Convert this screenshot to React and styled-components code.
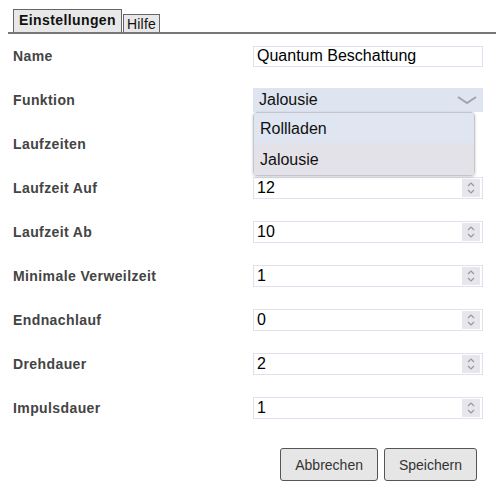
import React from 'react'
import styled, { createGlobalStyle } from 'styled-components'

const GlobalStyle = createGlobalStyle`
  body {
    margin: 0;
    background: #fff;
    font-family: "Liberation Sans", Arial, sans-serif;
  }
`

const Page = styled.div`
  padding: 9px 0 0 8px;
  width: 488px;
`

const TabBar = styled.div`
  display: flex;
  align-items: flex-end;
  gap: 1px;
  padding-left: 5px;
  border-bottom: 2px solid #777;
`

const Tab = styled.div`
  box-sizing: border-box;
  height: ${props => (props.active ? '23px' : '18px')};
  padding: ${props => (props.active ? '0 5px' : '0 3px')};
  border: 1px solid #666;
  border-bottom: none;
  background: #e8e8e8;
  color: #111;
  font-size: 14px;
  letter-spacing: ${props => (props.active ? '0.4px' : '0.2px')};
  font-weight: ${props => (props.active ? 'bold' : 'normal')};
  line-height: ${props => (props.active ? '21px' : '19px')};
`

const Form = styled.div`
  display: flex;
  flex-direction: column;
  padding-left: 5px;
`

const Row = styled.div`
  position: relative;
  display: grid;
  grid-template-columns: 240px 230px;
  align-items: center;
  height: 44px;
`

const Label = styled.div`
  font-size: 14px;
  letter-spacing: 0.4px;
  font-weight: bold;
  color: #444;
`

const TextBox = styled.div`
  box-sizing: border-box;
  height: ${props => (props.short ? '21px' : '22px')};
  border: 1px solid #dde2ee;
  padding-left: 3px;
  font-size: 16px;
  line-height: 20px;
  color: #000;
  display: flex;
  align-items: center;
  justify-content: space-between;
`

const Spinner = styled.div`
  width: 18px;
  height: 18px;
  margin-right: 2px;
  background: #e6e6ec;
  display: flex;
  align-items: center;
  justify-content: center;
`

const Select = styled.div`
  box-sizing: border-box;
  height: 24px;
  padding: 0 6px;
  background: #dee4f0;
  font-size: 16px;
  color: #111;
  display: flex;
  align-items: center;
  justify-content: space-between;
`

const Menu = styled.div`
  position: absolute;
  left: 240px;
  top: 34px;
  width: 222px;
  box-sizing: border-box;
  border: 1px solid #c4c4cc;
  border-radius: 4px;
  box-shadow: 0 1px 3px rgba(0, 0, 0, 0.2);
  overflow: hidden;
  z-index: 2;
`

const Option = styled.div`
  height: 30px;
  padding: 2px 0 0 6px;
  box-sizing: border-box;
  display: flex;
  align-items: center;
  font-size: 16px;
  color: #111;
  background: ${props => (props.hover ? '#e4e2e9' : '#dfe5f1')};
  &:last-child {
    height: 32px;
  }
`

const Buttons = styled.div`
  display: flex;
  justify-content: flex-end;
  gap: 6px;
  margin-top: 18px;
  padding-right: 19px;
`

const Button = styled.button`
  box-sizing: border-box;
  height: 33px;
  padding: 0 14px;
  border: 1px solid #555;
  border-radius: 3px;
  background: #e6e6e6;
  color: #333;
  font-family: "Liberation Sans", Arial, sans-serif;
  font-size: 14px;
`

const SpinIcon = () => (
  <svg width="10" height="14" viewBox="0 0 10 14">
    <path d="M2 5 L5 2 L8 5" fill="none" stroke="#999" strokeWidth="1.2" />
    <path d="M2 9 L5 12 L8 9" fill="none" stroke="#999" strokeWidth="1.2" />
  </svg>
)

const Chevron = () => (
  <svg width="20" height="10" viewBox="0 0 20 10">
    <path d="M1 2 L10 8 L19 2" fill="none" stroke="#a0a4ae" strokeWidth="2" />
  </svg>
)

const numbers = [
  ['Laufzeit Auf', '12'],
  ['Laufzeit Ab', '10'],
  ['Minimale Verweilzeit', '1'],
  ['Endnachlauf', '0'],
  ['Drehdauer', '2'],
  ['Impulsdauer', '1'],
]

export default function App() {
  return (
    <Page>
      <GlobalStyle />
      <TabBar>
        <Tab active>Einstellungen</Tab>
        <Tab>Hilfe</Tab>
      </TabBar>
      <Form>
        <Row>
          <Label>Name</Label>
          <TextBox short>Quantum Beschattung</TextBox>
        </Row>
        <Row>
          <Label>Funktion</Label>
          <Select>
            Jalousie
            <Chevron />
          </Select>
          <Menu>
            <Option>Rollladen</Option>
            <Option hover>Jalousie</Option>
          </Menu>
        </Row>
        <Row>
          <Label>Laufzeiten</Label>
        </Row>
        {numbers.map(([label, value]) => (
          <Row key={label}>
            <Label>{label}</Label>
            <TextBox>
              {value}
              <Spinner>
                <SpinIcon />
              </Spinner>
            </TextBox>
          </Row>
        ))}
      </Form>
      <Buttons>
        <Button>Abbrechen</Button>
        <Button>Speichern</Button>
      </Buttons>
    </Page>
  )
}
